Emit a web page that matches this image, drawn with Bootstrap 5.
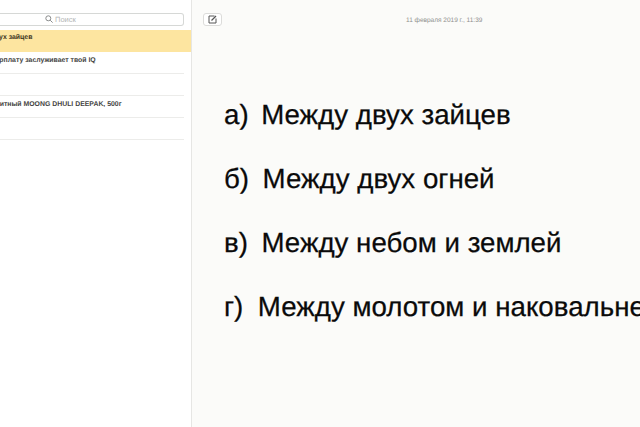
<!DOCTYPE html>
<html lang="ru"><head><meta charset="utf-8">
<link href="https://cdn.jsdelivr.net/npm/bootstrap@5.3.0/dist/css/bootstrap.min.css" rel="stylesheet">
<style>
html,body{height:427px;overflow:hidden;background:#fbfbf9;font-family:"Liberation Sans",Arial,sans-serif;text-rendering:geometricPrecision}
.shell{height:427px}
.side{width:192px;flex:none;background:#fff;border-right:1px solid #e6e6e4;overflow:hidden}
.searchwrap{height:30px;padding:13px 7px 0 0}
.searchbox{height:12.5px;border:1px solid #d6d8d6;border-radius:3px;border-left:0;border-top-left-radius:0;border-bottom-left-radius:0;font-size:7.5px;color:#b4b6b6;gap:2px;line-height:1;padding-left:45px}
.note{height:22px;margin-right:7px;border-bottom:1px solid #ececea;font-size:6.9px;font-weight:700;color:#444442;white-space:nowrap;padding-top:4px;line-height:9px}
.note.sel{margin-right:0;background:#fde5a0;border-bottom:0;color:#3d3520;padding-top:3px}
.t1{margin-left:-34px}
.t2{margin-left:-31px}
.t3{margin-left:-30px}
.work{min-width:0;overflow:hidden}
.tool{height:30px;padding:13px 0 0 11px}
.editbtn{width:19px;height:12.5px;background:#fff;border:1px solid #dcdcda;border-radius:3px}
.stamp{font-size:6.5px;color:#8f8f8d;margin-left:184px;line-height:1;padding-top:5px;white-space:nowrap}
.lines{padding:69px 0 0 32px;font-size:27.7px;line-height:32px;color:#0a0a0a;white-space:nowrap;-webkit-text-stroke:.25px #0a0a0a}
.lines p{margin:0 0 32px}
.gap1{margin-left:12.5px}
.gap2{margin-left:13.5px}
.gap3{margin-left:13.5px}
.gap4{margin-left:14.5px}
</style></head>
<body>
<div class="shell d-flex">
  <div class="side">
    <div class="searchwrap">
      <div class="searchbox d-flex align-items-center">
        <svg width="8" height="8" viewBox="0 0 8 8" fill="none" stroke="#8a8c8c" stroke-width="1"><circle cx="3.3" cy="3.3" r="2.5"/><path d="M5.2 5.2 7.6 7.6"/></svg>
        <span>Поиск</span>
      </div>
    </div>
    <div class="note sel"><div class="t1">Между двух зайцев</div></div>
    <div class="note"><div class="t2">Какую зарплату заслуживает твой IQ</div></div>
    <div class="note"></div>
    <div class="note"><div class="t3">Маш сплитный MOONG DHULI DEEPAK, 500г</div></div>
    <div class="note"></div>
  </div>
  <div class="work flex-grow-1">
    <div class="tool d-flex align-items-start">
      <div class="editbtn d-flex align-items-center justify-content-center">
        <svg width="9" height="9" viewBox="0 0 9 9" fill="none" stroke="#555" stroke-width="1"><path d="M6.5 1H1v7h7V3.5"/><path d="M3.5 5.5 8 1" stroke-width="1.2"/></svg>
      </div>
      <div class="stamp">11 февраля 2019 г., 11:39</div>
    </div>
    <div class="lines">
      <p>а)<span class="gap1">Между двух зайцев</span></p>
      <p>б)<span class="gap2">Между двух огней</span></p>
      <p>в)<span class="gap3">Между небом и землей</span></p>
      <p>г)<span class="gap4">Между молотом и наковальней</span></p>
    </div>
  </div>
</div>
</body></html>
